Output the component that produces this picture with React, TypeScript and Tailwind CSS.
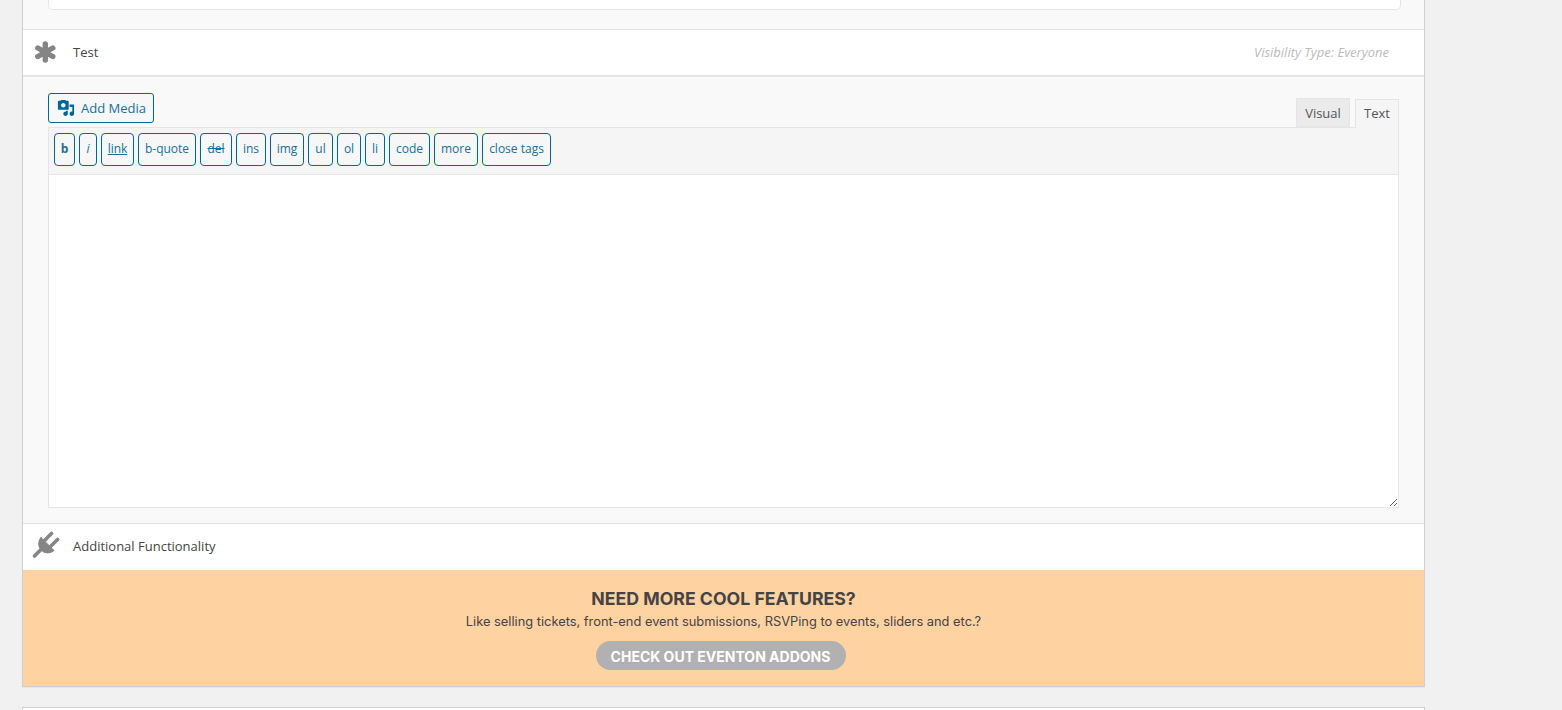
const tags: [string, string][] = [
  ["b", "w-[21px] font-bold"],
  ["i", "w-[18px] italic"],
  ["link", "w-[33px] underline"],
  ["b-quote", "w-[58px]"],
  ["del", "w-[32px] line-through"],
  ["ins", "w-[30px]"],
  ["img", "w-[34px]"],
  ["ul", "w-[25px]"],
  ["ol", "w-[24px]"],
  ["li", "w-[20px]"],
  ["code", "w-[41px]"],
  ["more", "w-[44px]"],
  ["close tags", "w-[69px]"],
];

function MediaIcon() {
  return (
    <svg width="18" height="18" viewBox="0 0 20 20" fill="#006799" className="shrink-0">
      <path d="M13 11V3c0-.55-.45-1-1-1h-1.67L9 1H5L3.67 2H2c-.55 0-1 .45-1 1v8c0 .55.45 1 1 1h10c.55 0 1-.45 1-1zM7 4.5c1.38 0 2.5 1.12 2.5 2.5S8.38 9.5 7 9.5 4.5 8.38 4.5 7 5.62 4.5 7 4.5zM14 6h5v10.5c0 1.38-1.12 2.5-2.5 2.5S14 17.88 14 16.5s1.12-2.5 2.5-2.5c.17 0 .34.02.5.05V9h-3V6zm-4 8.05V13h2v3.5c0 1.38-1.12 2.5-2.5 2.5S7 17.88 7 16.5 8.12 14 9.5 14c.17 0 .34.02.5.05z" />
    </svg>
  );
}

function AsteriskIcon() {
  return (
    <svg width="32" height="32" viewBox="30 35 32 32" stroke="#858585" strokeWidth="5.4" strokeLinecap="round" fill="none">
      <path d="M45.3 42V58M37.8 46L52.8 54.5M37.8 54.5L52.8 46" />
      <circle cx="45.3" cy="50.3" r="4.5" fill="#858585" stroke="none" />
    </svg>
  );
}

function PlugIcon() {
  return (
    <svg width="32" height="32" viewBox="30 531 32 32" fill="#858585" stroke="#858585" strokeLinecap="round">
      <path d="M45 540L51.5 533.5M51 546L57.5 539.5" fill="none" strokeWidth="3.6" />
      <path d="M41 537.5L54 550.5A9.2 9.2 0 0 1 41 537.5Z" strokeWidth="1" />
      <path d="M34.5 556L41 549.5" fill="none" strokeWidth="3.6" />
    </svg>
  );
}

export default function App() {
  return (
    <div className="h-[710px] overflow-hidden bg-[#f1f1f1] pl-[22px] pr-[137px] font-['Open_Sans',sans-serif] text-[#444]">
      <div className="border-x border-b border-[#ccd0d4] shadow-[0_1px_1px_rgba(0,0,0,0.04)]">
        <div className="h-[29px] bg-[#f9f9f9] pl-[25px] pr-[23px]">
          <div className="h-[10px] rounded-b-[5px] border-x border-b border-[#e5e5e5] bg-white" />
        </div>

        <div className="flex h-[48px] items-center border-t border-b-2 border-t-[#e1e1e1] border-b-[#e5e5e5] bg-white">
          <div className="w-[50px] shrink-0 pl-[7px]">
            <AsteriskIcon />
          </div>
          <span className="text-[13px]">Test</span>
          <span className="ml-auto pr-[35px] text-[13px] italic text-[#bbb]">Visibility Type: Everyone</span>
        </div>

        <div className="bg-[#f9f9f9] pb-[15px] pl-[25px] pr-[25px]">
          <div className="flex h-[50px] items-end justify-between">
            <button className="mb-[4px] flex h-[30px] w-[106px] items-center gap-[6px] rounded-[3px] border border-[#006799] bg-[#f7f7f7] pl-[8px] text-[13px] text-[#14719e]">
              <MediaIcon />
              <span className="pt-[2px]">Add Media</span>
            </button>
            <div className="flex items-end gap-[5px]">
              <div className="flex h-[29px] w-[54px] items-center justify-center border border-[#e5e5e5] bg-[#ebebeb] pt-[2px] text-[13px] text-[#555]">
                Visual
              </div>
              <div className="relative top-px flex h-[29px] w-[44px] items-center justify-center border border-b-0 border-[#e5e5e5] bg-[#f5f5f5] text-[13px] text-[#555]">
                Text
              </div>
            </div>
          </div>
          <div className="border border-[#e5e5e5] bg-white">
            <div className="flex h-[47px] gap-[4px] border-b border-[#e5e5e5] bg-[#f5f5f5] pl-[5px] pt-[5px]">
              {tags.map(([label, cls]) => (
                <button
                  key={label}
                  className={`h-[33px] rounded-[4px] border border-[#006799] bg-[#f7f7f7] pb-[2px] text-center text-[12px] text-[#14719e] ${cls}`}
                >
                  {label}
                </button>
              ))}
            </div>
            <textarea className="block h-[332px] w-full bg-white outline-none" />
          </div>
        </div>

        <div className="flex h-[47px] items-center border-t border-[#e1e1e1] bg-white">
          <div className="w-[50px] shrink-0 pl-[7px]">
            <PlugIcon />
          </div>
          <span className="text-[13px]">Additional Functionality</span>
        </div>

        <div className="flex h-[116px] flex-col items-center bg-[#fed2a1] pt-[18px] font-['Inter',sans-serif]">
          <div className="text-[17.7px] leading-[22px] font-bold">NEED MORE COOL FEATURES?</div>
          <div className="mt-[3px] text-[12.85px] leading-[18px]">
            Like selling tickets, front-end event submissions, RSVPing to events, sliders and etc.?
          </div>
          <div className="mt-[10px] flex h-[29px] w-[250px] -translate-x-[3px] items-center justify-center rounded-full bg-[#b1b1b1] pt-[1px] text-[14px] font-bold text-white">
            CHECK OUT EVENTON ADDONS
          </div>
        </div>
      </div>
      <div className="mt-[20px] h-[10px] border-x border-t border-[#ccd0d4] bg-white" />
    </div>
  );
}
